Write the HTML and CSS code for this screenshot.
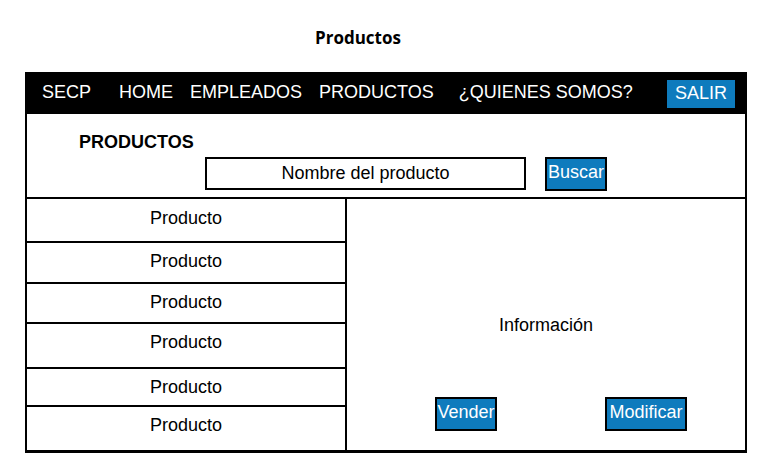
FILE: index.html
```html
<!DOCTYPE html>
<html>
<head>
  <link rel="stylesheet" href="styles.css">
</head>
<body>
  <h1 class="title">Productos</h1>
  <div class="frame">
    <div class="nav">
      <div class="nav-item brand">SECP</div>
      <div class="nav-item">HOME</div>
      <div class="nav-item">EMPLEADOS</div>
      <div class="nav-item">PRODUCTOS</div>
      <div class="nav-item about">¿QUIENES SOMOS?</div>
      <div class="nav-exit">SALIR</div>
    </div>
    <div class="search">
      <div class="search-label">PRODUCTOS</div>
      <div class="search-row">
        <div class="search-input">Nombre del producto</div>
        <div class="btn btn_search">Buscar</div>
      </div>
    </div>
    <div class="main">
      <div class="list">
        <div class="row row_1">Producto</div>
        <div class="row row_2">Producto</div>
        <div class="row row_3">Producto</div>
        <div class="row row_4">Producto</div>
        <div class="row row_5">Producto</div>
        <div class="row row_6">Producto</div>
      </div>
      <div class="info">
        <div class="info-text">Información</div>
        <div class="info-actions">
          <div class="btn btn_sell">Vender</div>
          <div class="btn btn_edit">Modificar</div>
        </div>
      </div>
    </div>
  </div>
</body>
</html>
```

FILE: styles.css
```css
body {
  margin: 0;
  background-color: #fff;
  font-family: 'Liberation Sans', Arial, sans-serif;
  color: #000;
}
.title {
  margin: 0;
  height: 72px;
  padding-top: 26px;
  box-sizing: border-box;
  text-align: center;
  font-family: 'Open Sans', sans-serif;
  font-size: 17px;
  font-weight: 700;
  line-height: 24px;
  padding-right: 52px;
}
.frame {
  width: 722px;
  margin-left: 25px;
  border: 2px solid #000;
  border-bottom-width: 3px;
  box-sizing: border-box;
}
.nav {
  display: flex;
  align-items: center;
  height: 40px;
  padding-left: 15px;
  padding-right: 10px;
  background-color: #000;
  color: #fff;
  font-size: 18px;
  gap: 17px;
}
.nav-item {
  padding-bottom: 3px;
}
.nav .brand {
  margin-right: 11px;
}
.nav .about {
  margin-left: 8px;
}
.nav-exit {
  margin-left: auto;
  height: 28px;
  line-height: 26px;
  padding: 0 8px;
  background-color: #0e7bbd;
}
.search {
  height: 85px;
  padding-top: 19px;
  border-bottom: 2px solid #000;
  box-sizing: border-box;
}
.search-label {
  margin-left: 52px;
  font-size: 18px;
  font-weight: 700;
  line-height: 18px;
}
.search-row {
  display: flex;
  margin-top: 6px;
  margin-left: 178px;
  gap: 19px;
}
.search-input {
  width: 321px;
  height: 33px;
  border: 2px solid #000;
  box-sizing: border-box;
  font-size: 18px;
  line-height: 29px;
  text-align: center;
}
.btn {
  height: 34px;
  border: 2px solid #000;
  box-sizing: border-box;
  background-color: #0e7bbd;
  color: #fff;
  font-size: 18px;
  line-height: 27px;
  text-align: center;
}
.btn_search {
  width: 62px;
}
.main {
  display: flex;
  height: 251px;
}
.list {
  width: 320px;
  border-right: 2px solid #000;
  box-sizing: border-box;
}
.row {
  display: flex;
  align-items: center;
  justify-content: center;
  border-bottom: 2px solid #000;
  box-sizing: border-box;
  font-size: 18px;
  padding-bottom: 3px;
}
.row_1 { height: 44px; }
.row_2 { height: 41px; }
.row_3 { height: 40px; padding-bottom: 1px; }
.row_4 { height: 45px; padding-bottom: 6px; }
.row_5 { height: 38px; padding-bottom: 0; padding-top: 1px; }
.row_6 { height: 43px; border-bottom: none; padding-bottom: 6px; }
.info {
  flex: 1;
  display: flex;
  flex-direction: column;
  padding-top: 116px;
}
.info-text {
  text-align: center;
  font-size: 18px;
  line-height: 20px;
}
.info-actions {
  display: flex;
  margin-top: 62px;
  padding-left: 88px;
  gap: 108px;
}
.btn_sell {
  width: 62px;
}
.btn_edit {
  width: 82px;
}
```
